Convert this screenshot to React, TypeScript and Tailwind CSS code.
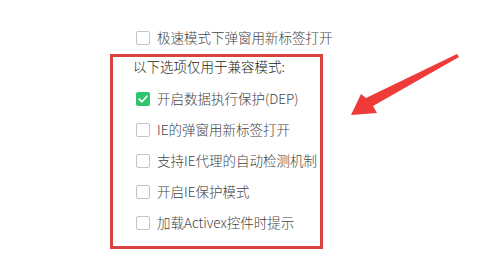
const FONT = '"Noto Sans CJK SC", "Liberation Sans", sans-serif';

function Box({ checked }: { checked?: boolean }) {
  if (checked) {
    return (
      <span className="flex h-[14px] w-[14px] shrink-0 items-center justify-center rounded-[2px] bg-[#2fc46e]">
        <svg viewBox="0 0 14 14" className="h-[14px] w-[14px]">
          <path d="M3.2 7.1 L6 9.8 L10.9 4.2" fill="none" stroke="#fff" strokeWidth="1.7" strokeLinecap="round" strokeLinejoin="round" />
        </svg>
      </span>
    );
  }
  return <span className="h-[14px] w-[14px] shrink-0 rounded-[2px] border border-[#c4c4c4] bg-white" />;
}

function Option({ label, checked }: { label: string; checked?: boolean }) {
  return (
    <div className="flex h-[31px] items-center gap-[7px] pl-[23px]">
      <Box checked={checked} />
      <span className="whitespace-nowrap text-[13.5px] font-light leading-none text-[#444]">{label}</span>
    </div>
  );
}

export default function App() {
  const options = [
    { label: "开启数据执行保护(DEP)", checked: true },
    { label: "IE的弹窗用新标签打开" },
    { label: "支持IE代理的自动检测机制" },
    { label: "开启IE保护模式" },
    { label: "加载Activex控件时提示" },
  ];

  return (
    <div className="relative h-[273px] w-[492px] overflow-hidden bg-white pt-[24px]" style={{ fontFamily: FONT }}>
      {/* Top option, outside the highlight */}
      <div className="flex h-[28px] items-center gap-[7px] pl-[136px]">
        <Box />
        <span className="whitespace-nowrap text-[13.5px] font-light leading-none text-[#444]">极速模式下弹窗用新标签打开</span>
      </div>

      {/* Highlighted compat-mode group */}
      <div className="ml-[110px] mt-[2px] h-[195px] w-[213px] border-[3px] border-[#d9423f]">
        <div className="flex h-[20px] items-center whitespace-nowrap pl-[20px] text-[13.5px] font-light leading-none text-[#222]">
          以下选项仅用于兼容模式:
        </div>
        <div className="mt-[6px]">
          {options.map((o) => (
            <Option key={o.label} label={o.label} checked={o.checked} />
          ))}
        </div>
      </div>

      {/* Annotation arrow */}
      <svg className="absolute left-0 top-0" width="492" height="273" viewBox="0 0 492 273">
        <polygon points="457,54 366,98 361,94 351,115 377,113 373,106 459,57" fill="#ef3a3a" />
      </svg>
    </div>
  );
}
